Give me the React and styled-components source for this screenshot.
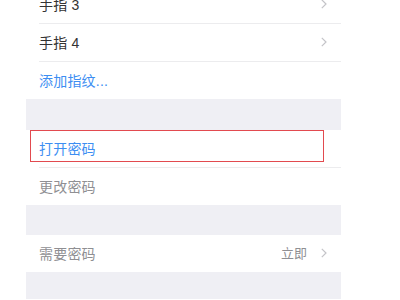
import React from 'react'
import styled, { createGlobalStyle } from 'styled-components'

const GlobalStyle = createGlobalStyle`
  html, body {
    margin: 0;
    padding: 0;
    background: #ffffff;
    overflow: hidden;
  }
  body {
    font-family: "Liberation Sans", "Noto Sans CJK SC", sans-serif;
  }
`

const Page = styled.div`
  width: 400px;
  height: 300px;
  overflow: hidden;
  background: #ffffff;
`

const Panel = styled.div`
  width: 315px;
  margin: -14px 0 0 26px;
  display: flex;
  flex-direction: column;
`

const Row = styled.div`
  position: relative;
  height: ${p => (p.$sep ? 38 : 37)}px;
  box-sizing: border-box;
  display: flex;
  align-items: center;
  padding: 0 14px 2px 13px;
  background: #ffffff;
  font-size: 14px;
  color: ${p => p.$tone === 'blue' ? '#3d8ef2' : p.$tone === 'gray' ? '#8f8f93' : '#333333'};
  ${p => p.$sep && `
    &::after {
      content: '';
      position: absolute;
      left: 13px;
      right: 0;
      bottom: 0;
      height: 1px;
      background: #ececee;
    }
  `}
`

const Label = styled.span`
  flex: 1;
  letter-spacing: 0.2px;
`

const Detail = styled.span`
  color: #8f8f93;
  font-size: 13px;
  margin-right: 14px;
`

const Gap = styled.div`
  height: ${p => p.$h}px;
  background: #efeff4;
`

const Highlight = styled.div`
  position: absolute;
  left: 4px;
  top: 0;
  width: 294px;
  height: 32px;
  box-sizing: border-box;
  border: 1px solid #e24a4f;
  pointer-events: none;
`

const Chevron = () => (
  <svg width="6" height="10" viewBox="0 0 6 10">
    <polyline points="0.8,0.8 5,5 0.8,9.2" fill="none" stroke="#c4c4c8" strokeWidth="1.2" />
  </svg>
)

export default function App() {
  return (
    <Page>
      <GlobalStyle />
      <Panel>
        <Row $sep>
          <Label>手指 3</Label>
          <Chevron />
        </Row>
        <Row $sep>
          <Label>手指 4</Label>
          <Chevron />
        </Row>
        <Row $tone="blue">
          <Label>添加指纹...</Label>
        </Row>
        <Gap $h={31} />
        <Row $sep $tone="blue">
          <Highlight />
          <Label>打开密码</Label>
        </Row>
        <Row $tone="gray">
          <Label>更改密码</Label>
        </Row>
        <Gap $h={30} />
        <Row $tone="gray">
          <Label>需要密码</Label>
          <Detail>立即</Detail>
          <Chevron />
        </Row>
        <Gap $h={27} />
        <Row />
      </Panel>
    </Page>
  )
}
